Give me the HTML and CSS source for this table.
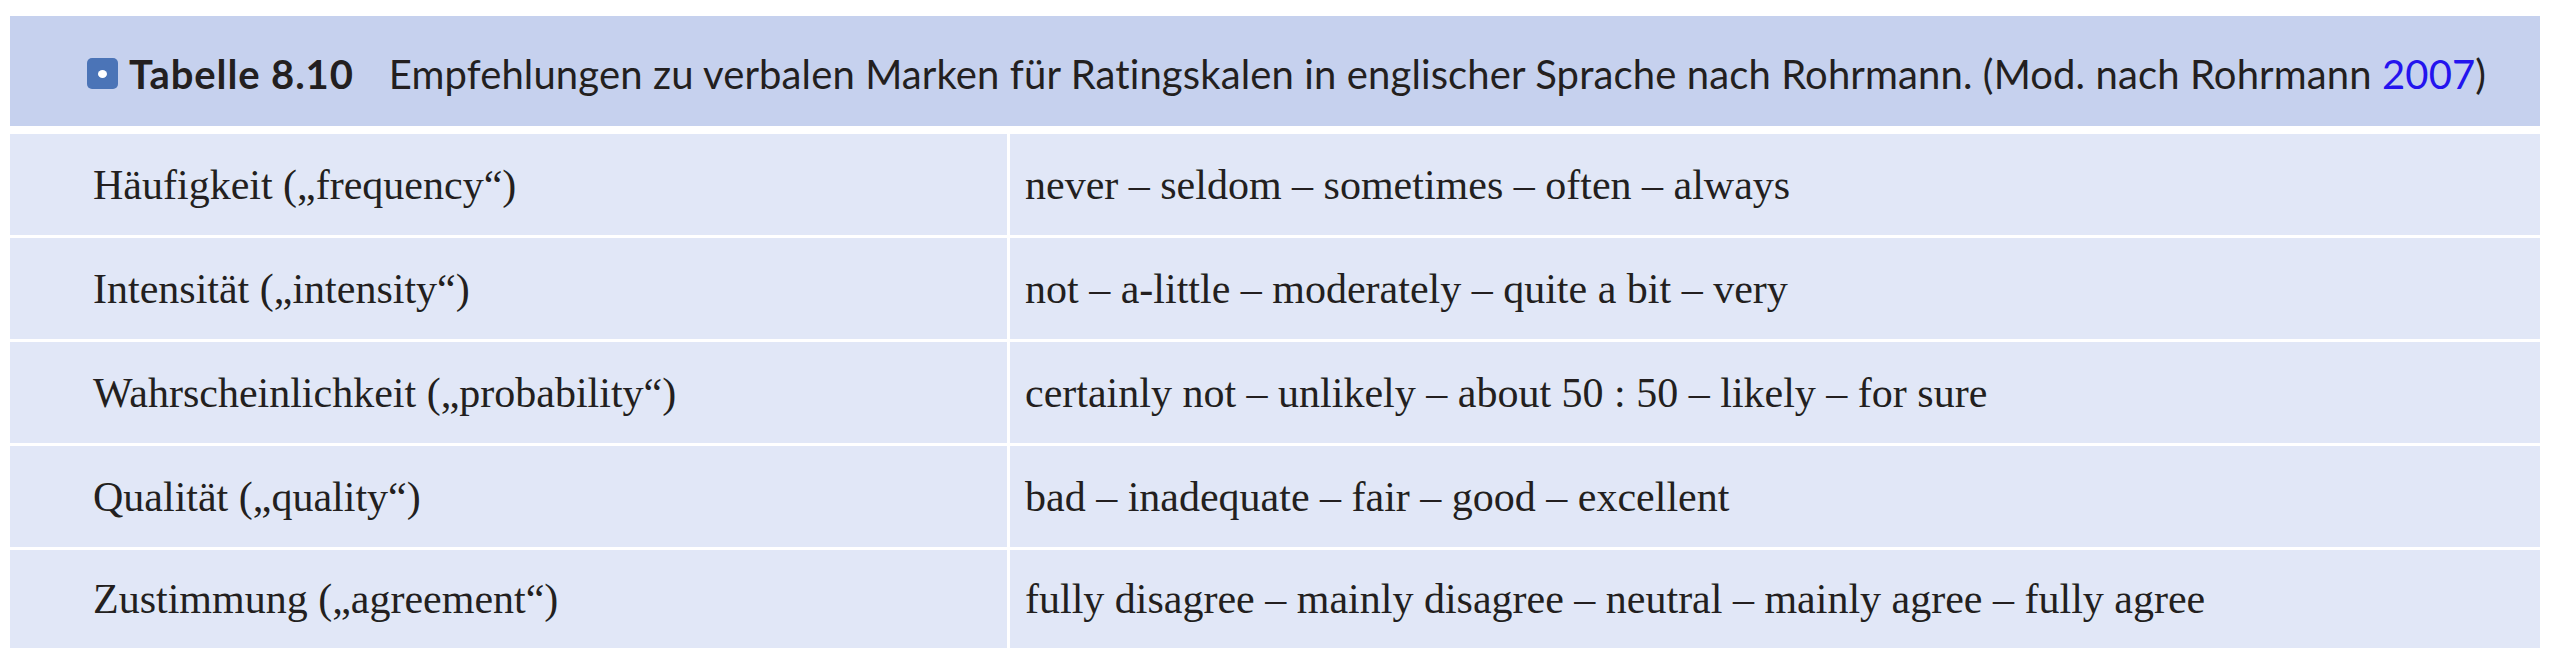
FILE: index.html
```html
<!DOCTYPE html>
<html lang="de">
<head>
<meta charset="utf-8">
<title>Tabelle 8.10</title>
<link rel="stylesheet" href="styles.css">
</head>
<body>
<div class="table">
  <div class="caption">
    <span class="icon"><span class="dot"></span></span>
    <span class="label">Tabelle 8.10</span>
    <span class="title">Empfehlungen zu verbalen Marken für Ratingskalen in englischer Sprache nach Rohrmann. (Mod. nach Rohrmann <span class="ref">2007</span>)</span>
  </div>
  <div class="row">
    <div class="cell left">Häufigkeit („frequency“)</div>
    <div class="cell right">never – seldom – sometimes – often – always</div>
  </div>
  <div class="row">
    <div class="cell left">Intensität („intensity“)</div>
    <div class="cell right">not – a-little – moderately – quite a bit – very</div>
  </div>
  <div class="row">
    <div class="cell left">Wahrscheinlichkeit („probability“)</div>
    <div class="cell right">certainly not – unlikely – about 50 : 50 – likely – for sure</div>
  </div>
  <div class="row">
    <div class="cell left">Qualität („quality“)</div>
    <div class="cell right">bad – inadequate – fair – good – excellent</div>
  </div>
  <div class="row">
    <div class="cell left">Zustimmung („agreement“)</div>
    <div class="cell right">fully disagree – mainly disagree – neutral – mainly agree – fully agree</div>
  </div>
</div>
</body>
</html>
```
FILE: styles.css
```css
html, body {
  margin: 0;
  padding: 0;
  background: #ffffff;
}

.table {
  margin: 16px 0 0 10px;
  width: 2530px;
  display: flex;
  flex-direction: column;
  gap: 3px;
}

.caption {
  height: 110px;
  margin-bottom: 5px;
  padding-top: 5px;
  box-sizing: border-box;
  background: #c6d1ee;
  display: flex;
  align-items: center;
  padding-left: 77px;
  font-family: Lato, "Open Sans", sans-serif;
  font-size: 40px;
  color: #231f20;
  white-space: nowrap;
}

.icon {
  width: 31px;
  height: 31px;
  border-radius: 5px;
  background: #4b74b7;
  display: flex;
  align-items: center;
  justify-content: center;
  margin-right: 11px;
  flex: none;
}

.dot {
  width: 9px;
  height: 8px;
  border-radius: 50%;
  background: #ffffff;
}

.label {
  font-weight: 700;
  letter-spacing: 0.9px;
  margin-right: 35px;
}

.title {
  letter-spacing: 0.12px;
}

.ref {
  color: #2414ee;
}

.row {
  display: grid;
  grid-template-columns: 997px 1fr;
  column-gap: 3px;
  height: 101px;
}

.row:last-child {
  height: 98px;
}

.cell {
  background: #e1e7f7;
  display: flex;
  align-items: center;
  font-family: "Liberation Serif", "Times New Roman", serif;
  font-size: 42px;
  color: #231f20;
  white-space: nowrap;
}

.left {
  padding-left: 83px;
}

.right {
  padding-left: 15px;
}
```
